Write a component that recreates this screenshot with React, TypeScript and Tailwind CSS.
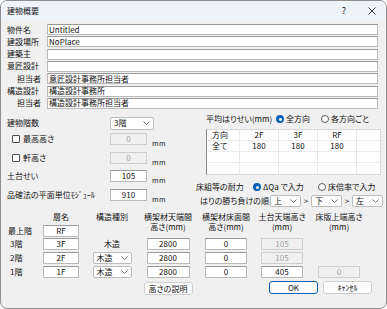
import React from 'react';

const Chevron = () => (
  <svg width="7" height="4" viewBox="0 0 7 4" className="shrink-0">
    <path d="M0.5 0.5 L3.5 3.5 L6.5 0.5" fill="none" stroke="#666" strokeWidth="0.9" />
  </svg>
);

type FieldProps = { value?: string; className?: string; disabled?: boolean; center?: boolean };

const Field = ({ value = '', className = '', disabled = false, center = false }: FieldProps) => (
  <div
    className={`flex items-center border whitespace-nowrap ${
      disabled ? 'bg-[#f0f0f0] border-[#cdcdcd] text-[#a3a3a3]' : 'bg-white border-[#bababa] border-t-[#999999]'
    } ${center ? 'justify-center' : 'pl-[1px]'} ${className}`}
  >
    {value}
  </div>
);

const Combo = ({ value, className = '' }: { value: string; className?: string }) => (
  <div className={`h-[12px] flex items-center justify-between bg-white border border-[#bdbdbd] rounded-[2px] pl-[3px] pr-[3px] ${className}`}>
    <span>{value}</span>
    <Chevron />
  </div>
);

const Radio = ({ on }: { on?: boolean }) =>
  on ? (
    <span className="w-[8px] h-[8px] rounded-full bg-[#005fb8] flex items-center justify-center shrink-0">
      <span className="w-[3px] h-[3px] rounded-full bg-white" />
    </span>
  ) : (
    <span className="w-[8px] h-[8px] rounded-full border border-[#5c5c5c] bg-white shrink-0" />
  );

const Check = () => <span className="w-[8px] h-[8px] border border-[#4f4f4f] rounded-[1px] bg-white shrink-0" />;

const Mm = () => <span className="ml-[5px] mt-[5px] text-[7px] tracking-[0.5px]">mm</span>;

const Btn = ({ children, primary = false, className = '' }: { children: React.ReactNode; primary?: boolean; className?: string }) => (
  <div
    className={`h-[13px] w-[49px] flex items-center justify-center rounded-[3px] border whitespace-nowrap ${
      primary ? 'bg-white border-[#005fb8]' : 'bg-[#fdfdfd] border-[#cfcfcf]'
    } ${className}`}
  >
    {children}
  </div>
);

export default function App() {
  const info = [
    { label: '物件名', value: 'Untitled' },
    { label: '建設場所', value: 'NoPlace' },
    { label: '建築主', value: '' },
    { label: '意匠設計', value: '' },
    { label: '担当者', value: '意匠設計事務所担当者', indent: true },
    { label: '構造設計', value: '構造設計事務所' },
    { label: '担当者', value: '構造設計事務所担当者', indent: true },
  ];

  const table = [
    ['方向', '2F', '3F', 'RF', ''],
    ['全て', '180', '180', '180', ''],
    ['', '', '', '', ''],
    ['', '', '', '', ''],
  ];
  const colW = ['w-[33px] pl-[5px]', 'w-[39px] justify-center', 'w-[39px] justify-center', 'w-[39px] justify-center', 'flex-1'];

  return (
    <div className="w-[387px] h-[309px] bg-white font-['Noto_Sans_CJK_JP','Noto_Sans',sans-serif] [font-feature-settings:'palt'] text-[8px] leading-[10px] text-[#111]">
      <div className="w-full h-full flex flex-col rounded-[7px] border border-[#8e8e8e] overflow-hidden bg-[#f0f0f0]">
        {/* title bar */}
        <div className="h-[19px] shrink-0 flex items-center bg-[#eef3fa] pl-[6px]">
          <span>建物概要</span>
          <span className="ml-auto text-[9px]">?</span>
          <svg width="8" height="8" viewBox="0 0 8 8" className="ml-[22px] mr-[10px]">
            <path d="M0.5 0.5 L7.5 7.5 M7.5 0.5 L0.5 7.5" stroke="#222" strokeWidth="0.9" />
          </svg>
        </div>

        <div className="flex-1 flex flex-col pl-[6px] pr-[8px] pt-[4px]">
          {/* project info */}
          <div className="flex flex-col gap-[1.33px]">
            {info.map((r, i) => (
              <div key={i} className="flex items-center">
                <span className={`w-[40px] shrink-0 ${r.indent ? 'pl-[10px]' : ''}`}>{r.label}</span>
                <Field value={r.value} className="flex-1 h-[11px]" />
              </div>
            ))}
          </div>

          {/* middle */}
          <div className="flex mt-[4px]">
            <div className="w-[189px] shrink-0 pt-[4px] flex flex-col gap-[3.5px]">
              <div className="flex items-center h-[13px]">
                <span className="w-[103px]">建物階数</span>
                <Combo value="3階" className="w-[44px] h-[13px]" />
              </div>
              <div className="flex items-start">
                <span className="w-[103px] h-[12px] flex items-center gap-[3px] pl-[5px]">
                  <Check />
                  最高高さ
                </span>
                <Field value="0" disabled center className="w-[37px] h-[12px]" />
                <Mm />
              </div>
              <div className="flex items-start">
                <span className="w-[103px] h-[12px] flex items-center gap-[3px] pl-[5px]">
                  <Check />
                  軒高さ
                </span>
                <Field value="0" disabled center className="w-[37px] h-[12px]" />
                <Mm />
              </div>
              <div className="flex items-start">
                <span className="w-[103px] h-[12px] flex items-center">土台せい</span>
                <Field value="105" center className="w-[37px] h-[12px]" />
                <Mm />
              </div>
              <div className="flex items-start">
                <span className="w-[103px] h-[12px] flex items-center whitespace-nowrap">品確法の平面単位ﾓｼﾞｭｰﾙ</span>
                <Field value="910" center className="w-[37px] h-[12px]" />
                <Mm />
              </div>
            </div>

            <div className="w-[187px] shrink-0 flex flex-col">
              <div className="h-[13px] flex items-center ml-[10px]">
                <span className="w-[70px] whitespace-nowrap">平均はりせい(mm)</span>
                <span className="w-[45px] flex items-center gap-[2px]">
                  <Radio on />
                  全方向
                </span>
                <span className="flex items-center gap-[2px]">
                  <Radio />
                  各方向ごと
                </span>
              </div>
              <div className="mt-[3.5px] ml-[10px] w-[175px] bg-white border border-[#d6d6d6] border-l-[#8a8a8a]">
                {table.map((row, ri) => (
                  <div key={ri} className="flex h-[11px] border-b border-[#ececec] last:border-b-0">
                    {row.map((c, ci) => (
                      <div key={ci} className={`flex items-center border-r border-[#e8e8e8] last:border-r-0 ${colW[ci]}`}>
                        {c}
                      </div>
                    ))}
                  </div>
                ))}
              </div>
              <div className="mt-[5.5px] h-[13px] flex items-center">
                <span className="w-[57px] whitespace-nowrap">床組等の耐力</span>
                <span className="w-[65px] flex items-center gap-[2px]">
                  <Radio on />
                  ΔQa で入力
                </span>
                <span className="flex items-center gap-[2px]">
                  <Radio />
                  床倍率で入力
                </span>
              </div>
              <div className="mt-[1.5px] h-[12px] flex items-center ml-[4px]">
                <span className="w-[70px] whitespace-nowrap">はりの勝ち負けの順</span>
                <Combo value="上" className="w-[31px]" />
                <span className="w-[10px] text-center">&gt;</span>
                <Combo value="下" className="w-[31px]" />
                <span className="w-[10px] text-center">&gt;</span>
                <Combo value="左" className="w-[31px]" />
              </div>
            </div>
          </div>

          {/* floors */}
          <div className="mt-[5px] grid grid-cols-[36px_36px_66px_46px_70px_42px_72px] grid-rows-[13px_13px_14px_14px_16px_13px]">
            <div className="col-start-2 row-start-1 flex justify-center">層名</div>
            <div className="col-start-3 row-start-1 flex justify-center">構造種別</div>
            <div className="col-start-4 row-start-1 row-span-2 flex flex-col items-center whitespace-nowrap">
              <span>横架材天端間</span>
              <span>高さ(mm)</span>
            </div>
            <div className="col-start-5 row-start-1 row-span-2 flex flex-col items-center whitespace-nowrap">
              <span>横架材床面間</span>
              <span>高さ(mm)</span>
            </div>
            <div className="col-start-6 row-start-1 row-span-2 flex flex-col items-center whitespace-nowrap">
              <span>土台天端高さ</span>
              <span>(mm)</span>
            </div>
            <div className="col-start-7 row-start-1 row-span-2 flex flex-col items-center whitespace-nowrap">
              <span>床版上端高さ</span>
              <span>(mm)</span>
            </div>

            <div className="col-start-1 row-start-2 h-[12px] flex items-center pl-[1px]">最上階</div>
            <Field value="RF" center className="col-start-2 row-start-2 h-[12px] self-start" />

            <div className="col-start-1 row-start-3 h-[12px] flex items-center pl-[3px]">3階</div>
            <Field value="3F" center className="col-start-2 row-start-3 h-[12px] self-start" />
            <div className="col-start-3 row-start-3 h-[12px] flex items-center justify-center">木造</div>
            <Field value="2800" center className="col-start-4 row-start-3 w-[43px] h-[12px] self-start justify-self-center" />
            <Field value="0" center className="col-start-5 row-start-3 w-[42px] h-[12px] self-start justify-self-center" />
            <Field value="105" disabled center className="col-start-6 row-start-3 h-[12px] self-start" />

            <div className="col-start-1 row-start-4 h-[12px] flex items-center pl-[3px]">2階</div>
            <Field value="2F" center className="col-start-2 row-start-4 h-[12px] self-start" />
            <Combo value="木造" className="col-start-3 row-start-4 w-[39px] self-start justify-self-center" />
            <Field value="2800" center className="col-start-4 row-start-4 w-[43px] h-[12px] self-start justify-self-center" />
            <Field value="0" center className="col-start-5 row-start-4 w-[42px] h-[12px] self-start justify-self-center" />
            <Field value="105" disabled center className="col-start-6 row-start-4 h-[12px] self-start" />

            <div className="col-start-1 row-start-5 h-[12px] flex items-center pl-[3px]">1階</div>
            <Field value="1F" center className="col-start-2 row-start-5 h-[12px] self-start" />
            <Combo value="木造" className="col-start-3 row-start-5 w-[39px] self-start justify-self-center" />
            <Field value="2800" center className="col-start-4 row-start-5 w-[43px] h-[12px] self-start justify-self-center" />
            <Field value="0" center className="col-start-5 row-start-5 w-[42px] h-[12px] self-start justify-self-center" />
            <Field value="405" center className="col-start-6 row-start-5 h-[12px] self-start" />
            <Field value="0" disabled center className="col-start-7 row-start-5 w-[42px] h-[12px] self-start justify-self-center" />

            <div className="col-start-4 row-start-6 flex justify-center">
              <Btn className="shrink-0">高さの説明</Btn>
            </div>
            <div className="col-start-6 col-span-2 row-start-6 flex justify-end gap-[5px] pr-[3px] -mt-[1px]">
              <Btn primary>OK</Btn>
              <Btn>ｷｬﾝｾﾙ</Btn>
            </div>
          </div>
        </div>
      </div>
    </div>
  );
}
